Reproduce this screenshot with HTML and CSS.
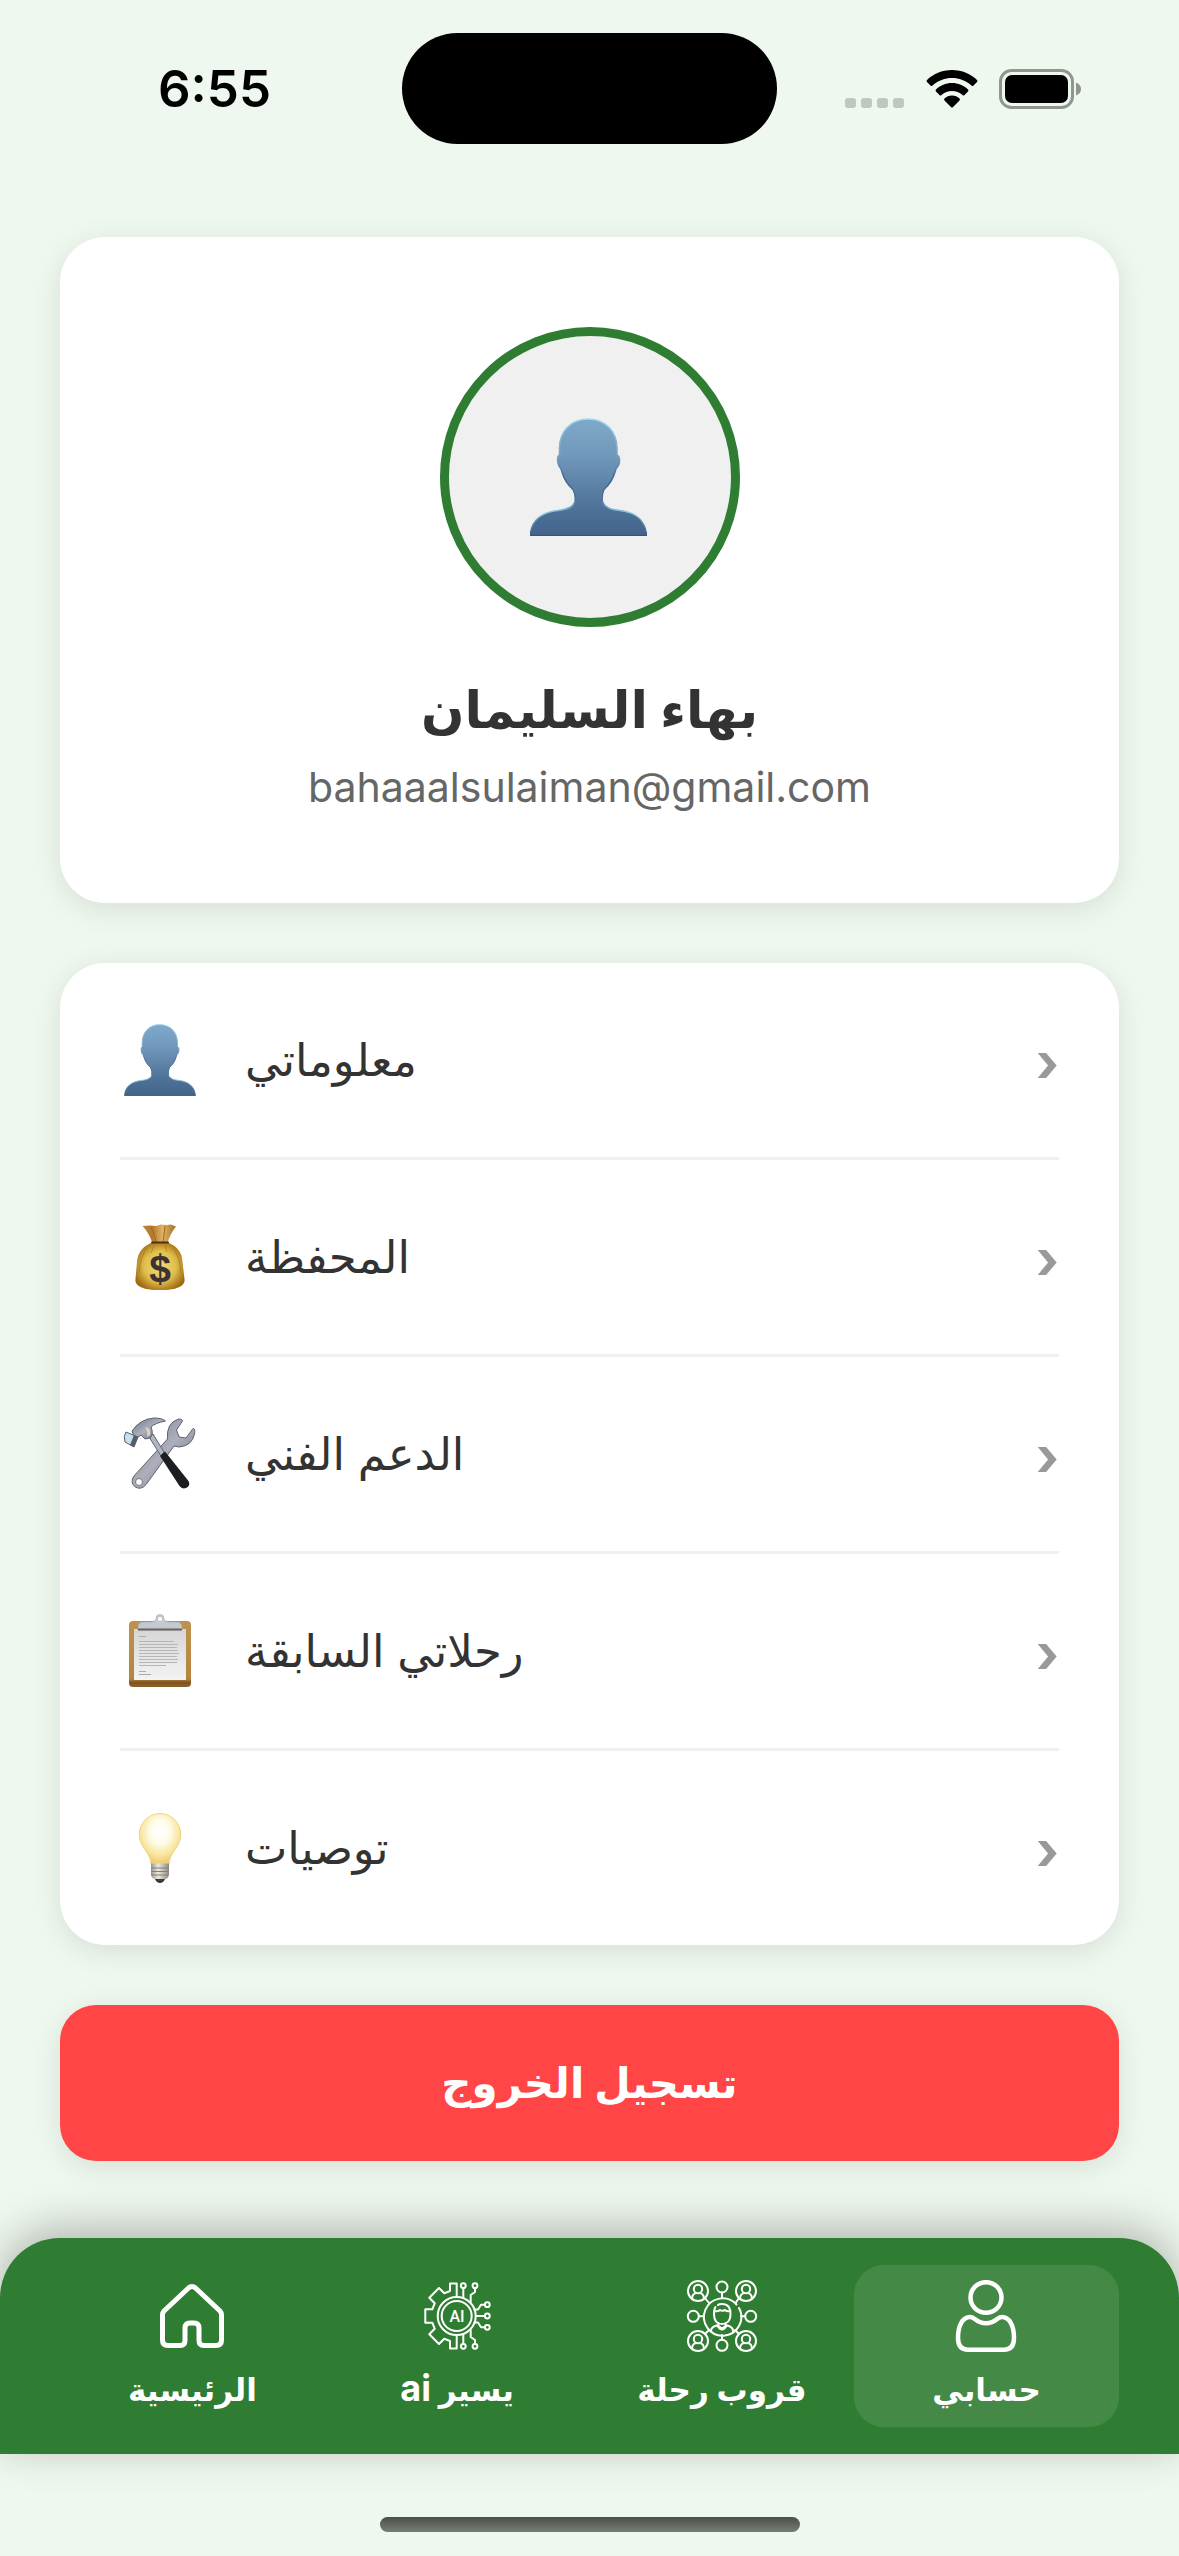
FILE: index.html
```html
<!DOCTYPE html>
<html lang="ar">
<head>
<meta charset="utf-8">
<meta name="viewport" content="width=device-width, initial-scale=1">
<title>حسابي</title>
<link rel="stylesheet" href="styles.css">
</head>
<body>
<svg class="defs" aria-hidden="true">
  <defs>
    <linearGradient id="blue" x1="0" y1="0" x2="0" y2="1"><stop offset="0" stop-color="#7fa8ca"/><stop offset=".3" stop-color="#7199bc"/><stop offset=".75" stop-color="#4f7399"/><stop offset="1" stop-color="#43638b"/></linearGradient>
    <linearGradient id="edge" x1="0" y1="0" x2="0" y2="1"><stop offset="0" stop-color="#a3dcec"/><stop offset=".35" stop-color="#7199bc"/><stop offset=".5" stop-color="#3f628c"/><stop offset=".7" stop-color="#4f7399"/><stop offset=".8" stop-color="#8ccbe0"/><stop offset="1" stop-color="#35557d"/></linearGradient>
    <radialGradient id="gold" cx=".5" cy=".5" r=".55"><stop offset="0" stop-color="#f2dd78"/><stop offset=".6" stop-color="#dfbd4a"/><stop offset="1" stop-color="#a06c14"/></radialGradient>
    <linearGradient id="tie"><stop offset="0" stop-color="#b98a44"/><stop offset=".3" stop-color="#b5762a"/><stop offset=".6" stop-color="#ddb566"/><stop offset="1" stop-color="#a86e28"/></linearGradient>
    <linearGradient id="steel" x1="0" y1="0" x2="1" y2="1"><stop offset="0" stop-color="#66768a"/><stop offset=".5" stop-color="#adb0bc"/><stop offset="1" stop-color="#62626e"/></linearGradient>
    <linearGradient id="wood" x1="0" y1="0" x2="0" y2="1"><stop offset="0" stop-color="#bd9250"/><stop offset=".88" stop-color="#b5853f"/><stop offset=".93" stop-color="#7d5420"/><stop offset="1" stop-color="#8c612b"/></linearGradient>
    <linearGradient id="paper" x1="0" y1="0" x2="0" y2="1"><stop offset="0" stop-color="#d6d6d6"/><stop offset="1" stop-color="#f3f3f3"/></linearGradient>
    <radialGradient id="glow" cx=".5" cy=".36" r=".6"><stop offset="0" stop-color="#ffffff"/><stop offset=".4" stop-color="#fffbea"/><stop offset=".75" stop-color="#f9e7a3"/><stop offset="1" stop-color="#efd078"/></radialGradient>
    <linearGradient id="screw"><stop offset="0" stop-color="#9b958c"/><stop offset=".4" stop-color="#ece8e2"/><stop offset="1" stop-color="#8f897f"/></linearGradient>
    <symbol id="person" viewBox="0 0 117 118">
      <path d="M58 1C40 1 29.500 14 29.500 30V37C27 38 27 44 29 48Q31 50 32 54C34 61 39 68 43 71.500Q46 77 45 84C43 90 36 91.500 28 92.500C12 94 1 102 .5 117.500H116.500C115.500 102 105 94 90 92.500C81 91.500 75 90 72.500 84Q71.500 77 74 71.500C79 67 83 61 85 54Q86 50 88 48C90.500 44 90 38 87 37V30C87 14 76 1 58 1Z" fill="url(#blue)" stroke="url(#edge)" stroke-width="1.500"/>
    </symbol>
  </defs>
</svg>

<header class="status">
  <time class="clock">6:55</time>
  <div class="island"></div>
  <div class="signals">
    <svg width="60" height="12" viewBox="0 0 60 12" fill="#bfc7c0"><rect y="1" width="11" height="10" rx="3"/><rect x="16" y="1" width="11" height="10" rx="3"/><rect x="32" y="1" width="11" height="10" rx="3"/><rect x="48" y="1" width="11" height="10" rx="3"/></svg>
    <svg class="wifi" width="52" height="38" viewBox="0 0 52 38"><path d="M26 0C36 0 45 4 51 10Q52 11 51 12L47.500 15.500Q46.500 16.500 45.500 15.500C40 10.500 33 8 26 8S12 10.500 6.500 15.500Q5.500 16.500 4.500 15.500L1 12Q0 11 1 10C7 4 16 0 26 0ZM26 13C32 13 38 15.500 42 19.500Q43 20.500 42 21.500L38.500 25Q37.500 26 36.500 25C33.500 22.300 30 21 26 21S18.500 22.300 15.500 25Q14.500 26 13.500 25L10 21.500Q9 20.500 10 19.500C14 15.500 20 13 26 13ZM26 25.500C29 25.500 31.500 26.500 33.500 28.500Q34.500 29.500 33.500 30.500L27 37Q26 38 25 37L18.500 30.500Q17.500 29.500 18.500 28.500C20.500 26.500 23 25.500 26 25.500Z"/></svg>
    <svg width="83" height="40" viewBox="0 0 83 40"><rect x="1.500" y="1.500" width="72" height="37" rx="11" fill="none" stroke="#90968f" stroke-width="3"/><rect x="6" y="6" width="63" height="28" rx="7"/><path d="M77 13.500Q82 15.500 82 20T77 26.500Z" fill="#90968f"/></svg>
  </div>
</header>

<main class="content">
  <section class="card profile">
    <div class="avatar"><svg width="117" height="118"><use href="#person"/></svg></div>
    <h1 class="name" dir="rtl">بهاء السليمان</h1>
    <p class="email">bahaaalsulaiman@gmail.com</p>
  </section>

  <nav class="card menu">
    <a class="row" href="#info">
      <svg class="emoji" viewBox="0 0 80 80"><use href="#person" x="4" y="4" width="72" height="72"/></svg>
      <span class="label" dir="rtl">معلوماتي</span><span class="chevron">›</span>
    </a>
    <a class="row" href="#wallet">
      <svg class="emoji" viewBox="0 0 80 80">
        <path d="M22.500 9L30 8.500 36 9 41 7.500 47 8 51 7.500 56 9.500Q50 17 47.500 26H32.500Q29 16 22.500 9Z" fill="url(#tie)"/>
        <path d="M31 10Q35 17 36 25M45 9Q44 18 43 25" stroke="#a3671f" fill="none"/>
        <path d="M32 25.500H48C56 29 62 34 62.500 45L64.500 62C65.500 68 59 73 40 73S14.500 68 15.500 62L17 45C18 34 24 29 32 25.500Z" fill="url(#gold)"/>
        <path d="M27 31Q20 40 19 56M53 31Q60 40 61 56M34 29L31 36M45 28L47 35" stroke="#a9771d" fill="none" opacity=".7"/>
        <path d="M32 25.500H48" stroke="#54300f" stroke-width="2" stroke-linecap="round"/>
        <text class="dollar" x="40" y="65" text-anchor="middle">$</text>
      </svg>
      <span class="label" dir="rtl">المحفظة</span><span class="chevron">›</span>
    </a>
    <a class="row" href="#support">
      <svg class="emoji" viewBox="0 0 80 80">
        <path d="M58.500 5Q62 4.500 62.500 7L56.500 16 59 23 66 24 73 14.500Q75.500 14 74.500 20Q72 32 59 33L54 32 26.500 70Q21 77 14.500 72.500Q10 68 14 62L47.500 25Q46 9 58.500 5Z" fill="url(#steel)" stroke="#62626e"/>
        <circle cx="19" cy="68" r="3.500" fill="#fff" stroke="#74747e"/>
        <path d="M29 23L33 20 44 38 41 42Z" fill="#aeb6c2" stroke="#5e6773"/>
        <path d="M40 42L45 37.500 68.500 67Q71 71.500 66 74Q62 75.500 59.500 72Z" fill="#1d1e21"/>
        <path d="M12 17Q20 5 34 4Q42 4 45.500 7Q35 9 31 13Q34 20 30 24L25 25 21 21 15 25Z" fill="url(#steel)" stroke="#56606f"/>
        <path d="M25 13Q31 14 30 21L27 23Q28 17 25 13Z" fill="#e3d3bf"/>
        <path d="M6 18L18 23 14 33 5 28Q3 22 6 18Z" fill="#c4e0ee" stroke="#59616b"/>
        <path d="M14 21L18 23 14 33 10 31Z" fill="#555d69"/>
      </svg>
      <span class="label" dir="rtl">الدعم الفني</span><span class="chevron">›</span>
    </a>
    <a class="row" href="#trips">
      <svg class="emoji" viewBox="0 0 80 80">
        <rect x="9" y="10" width="62" height="66" rx="4" fill="url(#wood)"/>
        <rect x="14" y="18" width="52" height="51" fill="url(#paper)"/>
        <path d="M19 25.500H26M19 60.500H26M19 63.500H31" stroke="#aaa"/>
        <path d="M19 30.500H54M19 33.500H58M19 36.500H57M19 39.500H58M19 42.500H59M19 45.500H57M19 48.500H58M19 51.500H57M19 54.500H46" stroke="#b5b5b5"/>
        <path d="M18 19V16Q18 11 24 11H32Q36 10 36 7.500A4 4 0 0 1 44 7.500Q44 10 48 11H56Q62 11 62 16V19Z" fill="#c3c9d1" stroke="#9aa7b6" stroke-width=".6"/>
        <path d="M18 18.500H62" stroke="#6d6258" stroke-width="2"/>
        <circle cx="40" cy="8" r="2" fill="#fff"/>
      </svg>
      <span class="label" dir="rtl">رحلاتي السابقة</span><span class="chevron">›</span>
    </a>
    <a class="row" href="#tips">
      <svg class="emoji" viewBox="0 0 80 80">
        <path d="M40 5.500A20.700 20.700 0 0 1 60.700 26C60.700 40 49.500 44 49 56H31C30.500 44 19.300 40 19.300 26A20.700 20.700 0 0 1 40 5.500Z" fill="url(#glow)" stroke="#f1d685"/>
        <path d="M31 55.500H49V67Q48 71 44 71.500H36Q32 71 31 67Z" fill="url(#screw)"/>
        <path d="M31 60H49M31 63.500H49M31 67H48" stroke="#857f75"/>
        <path d="M35 71H45Q43.500 75 40 75T35 71Z" fill="#3b3b3b"/>
      </svg>
      <span class="label" dir="rtl">توصيات</span><span class="chevron">›</span>
    </a>
  </nav>

  <button class="logout" type="button" dir="rtl">تسجيل الخروج</button>
</main>

<nav class="tabs">
  <a class="tab" href="#home">
    <svg class="icon" viewBox="0 0 72 72" stroke-width="5"><path d="M39.500 8L64 31Q65.500 32.500 65.500 35V60Q65.500 65.500 60 65.500H48Q43 65.500 43 60.500V48Q43 43 38 43H34Q29 43 29 48V60.500Q29 65.500 24 65.500H12Q6.500 65.500 6.500 60V35Q6.500 32.500 8 31L32.500 8Q36 5 39.500 8Z"/></svg>
    <span dir="rtl">الرئيسية</span>
  </a>
  <a class="tab" href="#ai">
    <svg class="icon" viewBox="0 0 72 72" stroke-width="2">
      <circle cx="35.700" cy="36" r="19"/><circle cx="35.700" cy="36" r="15"/>
      <path d="M35.700 17V3.500H29V11L23.300 13.300 18 8 8.300 17.700 13.700 23.300 11.300 29.300H4.300V42.700H11.300L13.700 48.700 8.300 54.300 18 64 23.300 58.700 29 61V68.500H35.700V55"/>
      <path d="M42.300 8V18M54 8V12L49.700 15V22M64 24.700H60L57 29.500H53.500M64 36H55M64 47.300H60L57 42.500H53.500M54 64V60L49.700 57V50M42.300 64V54"/>
      <circle cx="42.300" cy="5.700" r="2.400"/><circle cx="54" cy="5.700" r="2.400"/><circle cx="66.300" cy="24.700" r="2.400"/><circle cx="66.300" cy="36" r="2.400"/><circle cx="66.300" cy="47.300" r="2.400"/><circle cx="54" cy="66.300" r="2.400"/><circle cx="42.300" cy="66.300" r="2.400"/>
      <text class="chip" x="36" y="42" text-anchor="middle">AI</text>
    </svg>
    <span dir="rtl">يسير <span class="latin">ai</span></span>
  </a>
  <a class="tab" href="#group">
    <svg class="icon" viewBox="0 0 72 72" stroke-width="2">
      <path d="M53 28A18.700 18.700 0 1 1 50.500 24.500M54.500 31L53.500 29"/>
      <circle cx="36" cy="7" r="5.500"/><circle cx="36" cy="65.300" r="5.500"/><circle cx="7.300" cy="36.300" r="5.500"/><circle cx="64.700" cy="36.300" r="5.500"/>
      <path d="M36 12.500V17.500M36 55V60M13 36.300H17M55 36.300H59M19 18L23 23M53 18L49.500 23M19 54L23 50M53 54L49 50"/>
      <path d="M29.500 27Q28 29 28 34C28 41 31.500 44 36 44S44.500 41 44.500 34C44.500 27 41 24 36 24Q33 24 32 25M28 31Q32 32 34 30Q36 31.500 39 30Q41 32 44.500 31M32.500 43V46L36 48.500 39.500 46V43M25 51C25 46 30 46 32.500 45M47 51C47 46 42 46 39.500 45M31.500 46Q36 53 40.500 46"/>
      <g id="member"><circle cx="12" cy="11" r="10"/><circle cx="12" cy="9" r="4.200"/><path d="M6 18.500Q6.500 13.500 10 13M18 18.500Q17.500 13.500 14 13"/></g>
      <use href="#member" x="48"/><use href="#member" y="50"/><use href="#member" x="48" y="50"/>
    </svg>
    <span dir="rtl">قروب رحلة</span>
  </a>
  <a class="tab active" href="#account" aria-current="page">
    <svg class="icon" viewBox="0 0 72 72" stroke-width="4.500"><ellipse cx="35" cy="17.500" rx="15.500" ry="15.300"/><path d="M19 37C12 37 7 45 7 58Q7 69.700 17 69.700H53Q63 69.700 63 58C63 45 58 37 51 37Q49 37 47 38.500Q35 48 23 38.500Q21 37 19 37Z"/></svg>
    <span dir="rtl">حسابي</span>
  </a>
</nav>
<footer class="home-area"><div class="home-bar"></div></footer>
</body>
</html>
```
FILE: styles.css
```css
* { box-sizing: border-box; }

body {
  margin: 0;
  min-height: 100vh;
  display: flex;
  flex-direction: column;
  background: #eff8ef;
  color: #333;
  font-family: Inter, "DejaVu Sans", sans-serif;
}

a { color: inherit; text-decoration: none; }

.defs { position: absolute; width: 0; height: 0; }

.status {
  display: grid;
  grid-template-columns: 1fr 375px 1fr;
  align-items: center;
  height: 177px;
}
.clock {
  justify-self: center;
  padding-left: 27px;
  font-size: 51px;
  font-weight: 600;
  color: #000;
}
.island { height: 111px; border-radius: 56px; background: #000; }
.signals {
  display: flex;
  align-items: center;
  justify-content: flex-end;
  gap: 21px;
  padding-right: 97px;
}
.signals svg:first-child { align-self: flex-end; }

.content {
  flex: 1;
  display: flex;
  flex-direction: column;
  gap: 60px;
  padding: 60px;
}
.card {
  border-radius: 45px;
  background: #fff;
  box-shadow: 0 6px 30px rgba(0, 0, 0, .1);
}

.profile {
  display: flex;
  flex-direction: column;
  align-items: center;
  padding: 90px 60px;
}
.avatar {
  display: flex;
  align-items: center;
  justify-content: center;
  width: 300px;
  height: 300px;
  padding-right: 3px;
  border: 9px solid #2f7d32;
  border-radius: 50%;
  background: #f0f0f0;
}
.name {
  margin: 45px 0 15px;
  font-size: 51px;
  line-height: 75px;
  font-weight: 700;
}
.email {
  margin: 0;
  font-size: 41px;
  line-height: 51px;
  color: #666;
}

.menu { padding: 0 60px; }
.row {
  display: flex;
  align-items: center;
  height: 197px;
  border-bottom: 3px solid #f0f0f0;
}
.row:last-child { height: 194px; border-bottom: 0; }
.emoji { width: 80px; height: 80px; margin-right: 45px; }
.label { flex: 1; text-align: left; font-size: 45px; line-height: 60px; }
.chevron {
  padding-top: 6px;
  font-size: 54px;
  line-height: 60px;
  font-weight: 700;
  color: #999;
}
.dollar { font: 600 39px "Liberation Sans", sans-serif; fill: #3d3236; }

.logout {
  height: 156px;
  border: 0;
  border-radius: 36px;
  background: #ff4545;
  box-shadow: 0 6px 30px rgba(0, 0, 0, .1);
  color: #fff;
  font: 700 42px/60px Inter, "DejaVu Sans", sans-serif;
}

.tabs {
  display: grid;
  grid-template-columns: repeat(4, 1fr);
  padding: 27px 60px;
  border-radius: 60px 60px 0 0;
  background: #2f7d32;
  box-shadow: 0 -9px 45px rgba(0, 0, 0, .28);
  color: #fff;
}
.tab {
  display: flex;
  flex-direction: column;
  align-items: center;
  gap: 15px;
  height: 162px;
  padding-top: 15px;
  border-radius: 30px;
  font-size: 31px;
  line-height: 45px;
  font-weight: 600;
}
.latin { font-size: 36px; line-height: 1; font-weight: 700; }
.active { background: rgba(255, 255, 255, .1); }
.icon {
  width: 72px;
  height: 72px;
  fill: none;
  stroke: #fff;
  stroke-linecap: round;
  stroke-linejoin: round;
}
.chip { font: 500 16px Roboto, sans-serif; fill: #fff; stroke: none; }

.home-area {
  display: flex;
  justify-content: center;
  align-items: flex-end;
  height: 102px;
  padding-bottom: 24px;
}
.home-bar {
  width: 420px;
  height: 15px;
  border-radius: 8px;
  background: linear-gradient(#4b4f4a, #777d77);
}
```
